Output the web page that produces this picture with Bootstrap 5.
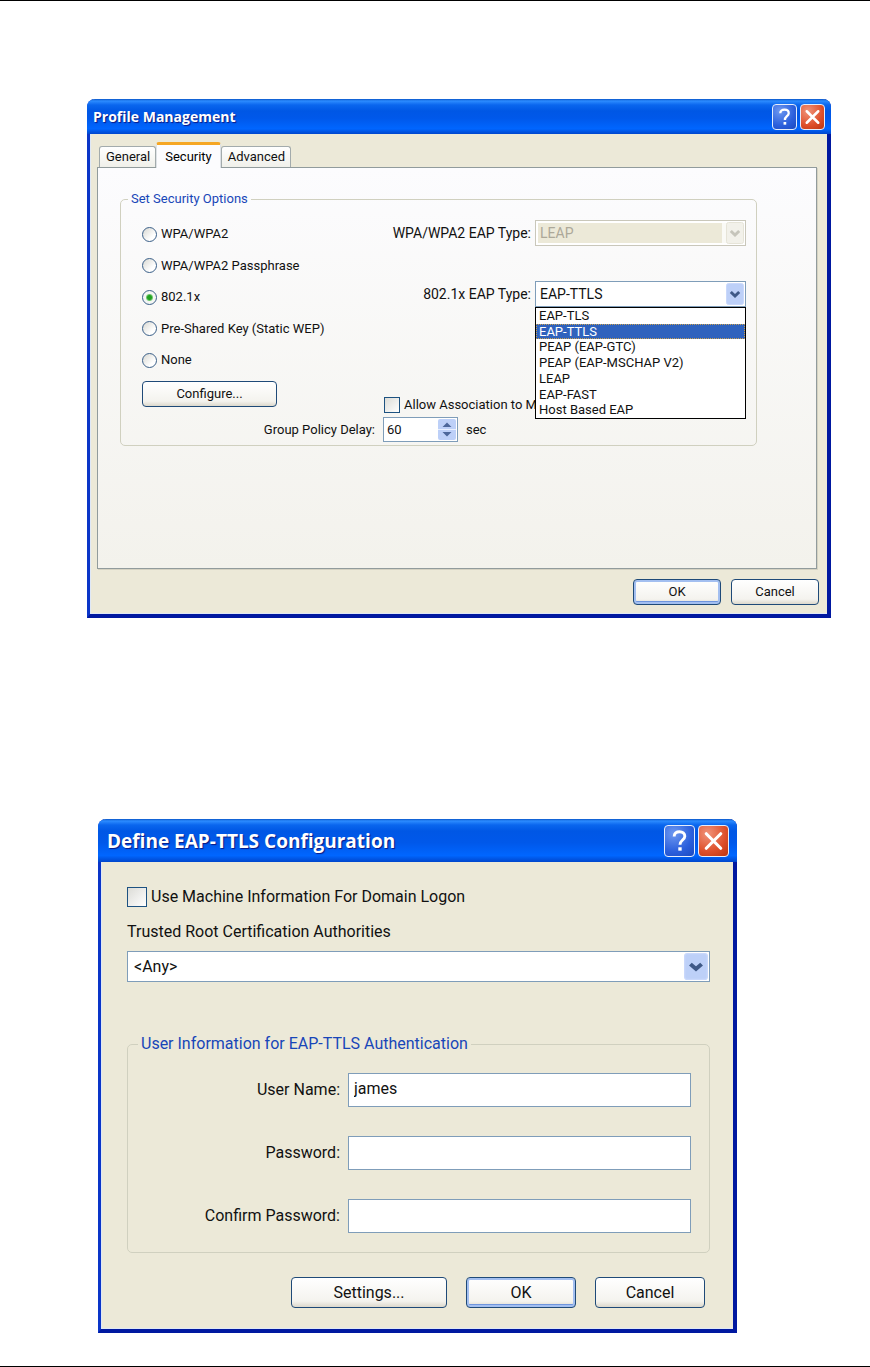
<!DOCTYPE html>
<html lang="en">
<head>
<meta charset="utf-8">
<meta name="viewport" content="width=device-width, initial-scale=1">
<title>Profile Management</title>
<link href="https://cdn.jsdelivr.net/npm/bootstrap@5.3.0/dist/css/bootstrap.min.css" rel="stylesheet">
<style>
  body { background: #fff; color: #111; font-family: Roboto, "Liberation Sans", sans-serif; }
  .sheet { border-top: 1px solid #000; border-bottom: 1px solid #000; padding: 98px 39px 33px 87px; }

  /* window frame */
  .win { --fs: 13px; --line: 20px; font-size: var(--fs); line-height: var(--line);
    border: solid #0a35c8; border-width: 0 4px 4px 3px; border-right-color: #0018a0; border-bottom-color: #0018a0;
    border-radius: 8px 8px 0 0; background: #ece9d8; }
  .win-config { --fs: 16px; margin: 201px 94px 0 11px; }
  .win-title { height: 35px; margin: 0 -4px 0 -3px; padding: 0 6px 0 6px; border-radius: 8px 8px 0 0; color: #fff;
    background: linear-gradient(#0a55c8 0, #2c8cff 2px, #0a66ee 6px, #0057e5 12px, #0058ea 55%, #0066ff 85%, #0046cc 100%); }
  .win-title h2 { font: 700 14px/20px "Open Sans", sans-serif; text-shadow: 1px 1px 1px #0a1883; }
  .win-config .win-title { height: 43px; padding-left: 9px; padding-right: 8px; }
  .win-config .win-title h2 { font-size: 19px; }
  .cap { width: 25px; height: 26px; padding: 0; border: 1px solid #e6eefc; border-radius: 4px; }
  .cap svg { width: 100%; height: 100%; display: block; }
  .win-config .cap { width: 31px; height: 32px; }
  .cap-help { margin-right: 3px; background: radial-gradient(circle at 30% 25%, #6d98f0, #2b5fdc 60%, #1c49c0); }
  .cap-close { background: radial-gradient(circle at 30% 25%, #f0937a, #de4f2a 60%, #bb3510); }

  .win-body { padding: 8px 8px 9px 7px; box-shadow: inset 1px -1px 0 #dfe8f6; }
  .win-config .win-body { padding: 25px 23px 21px 26px; }

  /* tabs */
  .xp-tabs { padding-left: 2px; border: 0; }
  .xp-tabs .nav-link { margin: 0; padding: 0 5px 0 6px; height: 21px; line-height: 20px; color: #111; border: 1px solid #a3abac; border-bottom: 0;
    border-radius: 3px 3px 0 0; background: linear-gradient(#fff, #f0f0ea); }
  .xp-tabs .nav-link.active { height: 26px; margin-bottom: -1px; padding: 0 8px; line-height: 20px; background: #fcfcfe; border-top: 3px solid #f5a623; position: relative; }
  .xp-panel { margin-right: 2px; border: 1px solid #919b9c; padding: 21px 59px 122px 22px; background: linear-gradient(#fcfcfe, #f3f2ec);
    box-shadow: 1px 1px 0 #d5d2c2; }

  .group { border: 1px solid #d0d0bf; border-radius: 5px; padding: 0; margin: 0; min-width: 0; }
  .group legend { float: none; width: auto; margin: 0 0 0 7px; padding: 0 3px; font-size: var(--fs); line-height: var(--line); color: #1846b8; }
  .win-config .group { margin-top: 52px; }
  .win-config .group legend { margin-left: 10px; }

  /* ticks and radios */
  .form-check-input.tick { margin: 0; padding: 0; flex: none; width: 16px; height: 16px; border: 1px solid #1d5281; border-radius: 0;
    background: linear-gradient(135deg, #dcdcd7, #fff); float: none; }
  .win-config .form-check-input.tick { width: 20px; height: 20px; }
  .dot { appearance: none; margin: 0; flex: none; width: 15px; height: 15px; border: 1px solid #3a5f88; border-radius: 50%;
    background: linear-gradient(135deg, #d8d8d2, #fff 70%); }
  .dot:checked { background: radial-gradient(circle, #21a121 0 2px, #6fc86f 3px, #f4f6f4 4px); }
  .choices { height: 146px; margin-bottom: 11px; }
  .left-col { padding: 15px 0 0 21px; width: 263px; }
  .right-col { padding-top: 11px; padding-right: 10px; }
  .type-row { margin-bottom: 35px; font-size: 14px; }
  .mixed-row { margin-top: 88px; white-space: nowrap; }

  /* fields */
  .field { border: 1px solid #7f9db9; border-radius: 0; background: #fff; color: #111; font: inherit; outline: 0; }
  .combo { position: relative; }
  .combo .field { appearance: none; width: 100%; height: 26px; padding: 0 24px 0 4px; display: block; }
  .combo .arrow { position: absolute; right: 2px; top: 2px; width: 18px; height: 22px; pointer-events: none; }
  .combo-type { width: 211px; flex: none; }
  .win-config .combo .field { height: 31px; padding-left: 6px; }
  .win-config .combo .arrow { width: 24px; height: 27px; }
  .combo .field:disabled { color: #aca899; opacity: 1; border-color: #c9c7ba; background: #ece9d8; box-shadow: inset 0 0 0 2px #fff, inset -23px 0 0 #fafaf6; }
  .drop { position: absolute; z-index: 5; left: 0; top: 100%; width: 100%; height: 112px; padding: 0; border: 1px solid #000;
    background: #fff; display: grid; grid-auto-rows: 1fr; list-style: none; margin: 0; font-size: 13px; }
  .drop li { padding-left: 3px; line-height: 16px; min-height: 0; }
  .drop .chosen { background: #2f62bd; color: #fff; outline: 1px dotted #c9a050; outline-offset: -1px; }
  .spin { position: relative; width: 75px; height: 25px; }
  .spin input { width: 100%; height: 100%; padding: 0 22px 0 3px; appearance: textfield; }
  .spin input::-webkit-inner-spin-button { appearance: none; }
  .spin svg { position: absolute; right: 2px; top: 2px; width: 18px; height: 21px; pointer-events: none; }
  .policy { padding: 2px 0 3px; }
  .policy label { width: 254px; }
  .roots-label { display: block; margin: 15px 0 9px; }
  .creds { display: grid; grid-template-columns: 212px 1fr; gap: 29px 8px; padding: 19px 18px 19px 0; align-items: center; }
  .creds .field { height: 34px; padding: 0 5px 4px; min-width: 0; width: 100%; }

  .buttons { display: flex; justify-content: flex-end; gap: 10px; margin-top: 10px; }
  .win-config .buttons { gap: 19px; margin: 24px 5px 0 0; }
  .xp-btn { height: 26px; padding: 0; border: 1px solid #1f4a78; border-radius: 4px; color: #111; font-size: var(--fs); line-height: 20px;
    background: linear-gradient(#fff, #f4f3ee 80%, #dcd8cc); width: 88px; }
  .xp-btn.default-btn { box-shadow: inset 0 0 0 2px #a3bff0, inset 0 -3px 0 #6f95dd; }
  .xp-btn.wide { width: 135px; }
  .win-config .xp-btn { height: 31px; width: 110px; }
  .win-config .xp-btn.wide { width: 156px; }
</style>
</head>
<body>
<svg class="d-none" aria-hidden="true">
  <symbol id="help" viewBox="0 0 24 24"><path d="M7.6 8.2C7.6 5.600 9.400 4.400 12 4.400s4.400 1.400 4.400 3.600c0 3-4 3.400-4 7" fill="none" stroke="#fff" stroke-width="2.400"/><rect x="11" y="17.200" width="2.800" height="2.800" fill="#fff"/></symbol>
  <symbol id="close" viewBox="0 0 24 24"><path d="M6 6l12 12M18 6L6 18" fill="none" stroke="#fff" stroke-width="2.600" stroke-linecap="round"/></symbol>
  <symbol id="down" viewBox="0 0 18 22" preserveAspectRatio="none"><rect x=".5" y=".5" width="17" height="21" rx="2" fill="#bdd0f8" stroke="#c9d8fb"/><path d="M4.800 9l4.200 4 4.200-4" fill="none" stroke="#3f5987" stroke-width="3"/></symbol>
  <symbol id="downOff" viewBox="0 0 18 22"><rect x=".5" y=".5" width="17" height="21" rx="2" fill="#f2f1ea" stroke="#e6e4d8"/><path d="M4.800 9l4.200 4 4.200-4" fill="none" stroke="#c6c5bb" stroke-width="3"/></symbol>
</svg>

<main class="sheet">
  <section class="win" aria-labelledby="t1">
    <header class="win-title d-flex align-items-center">
      <h2 class="m-0 me-auto" id="t1">Profile Management</h2>
      <button type="button" class="cap cap-help" aria-label="Help"><svg><use href="#help"/></svg></button>
      <button type="button" class="cap cap-close" aria-label="Close"><svg><use href="#close"/></svg></button>
    </header>
    <div class="win-body">
      <ul class="nav nav-tabs xp-tabs align-items-end" role="tablist">
        <li><button type="button" role="tab" class="nav-link">General</button></li>
        <li><button type="button" role="tab" class="nav-link active" aria-selected="true">Security</button></li>
        <li><button type="button" role="tab" class="nav-link">Advanced</button></li>
      </ul>
      <form class="xp-panel">
        <fieldset class="group">
          <legend>Set Security Options</legend>
          <div class="d-flex">
            <div class="left-col flex-shrink-0">
              <div class="choices d-flex flex-column justify-content-between">
                <div class="d-flex align-items-center gap-1"><input class="dot" type="radio" name="sec" id="r1"><label for="r1">WPA/WPA2</label></div>
                <div class="d-flex align-items-center gap-1"><input class="dot" type="radio" name="sec" id="r2"><label for="r2">WPA/WPA2 Passphrase</label></div>
                <div class="d-flex align-items-center gap-1"><input class="dot" type="radio" name="sec" id="r3" checked><label for="r3">802.1x</label></div>
                <div class="d-flex align-items-center gap-1"><input class="dot" type="radio" name="sec" id="r4"><label for="r4">Pre-Shared Key (Static WEP)</label></div>
                <div class="d-flex align-items-center gap-1"><input class="dot" type="radio" name="sec" id="r5"><label for="r5">None</label></div>
              </div>
              <button type="button" class="btn xp-btn wide">Configure...</button>
            </div>
            <div class="right-col flex-grow-1">
              <div class="type-row d-flex align-items-center justify-content-end gap-1">
                <label for="wpaType">WPA/WPA2 EAP Type:</label>
                <div class="combo combo-type"><select class="field" id="wpaType" disabled><option>LEAP</option></select><svg class="arrow"><use href="#downOff"/></svg></div>
              </div>
              <div class="type-row d-flex align-items-center justify-content-end gap-1 mb-0">
                <label for="xType">802.1x EAP Type:</label>
                <div class="combo combo-type">
                  <select class="field" id="xType"><option>EAP-TTLS</option></select><svg class="arrow"><use href="#down"/></svg>
                  <ul class="drop" role="listbox" aria-label="802.1x EAP Type">
                    <li role="option">EAP-TLS</li>
                    <li role="option" class="chosen" aria-selected="true">EAP-TTLS</li>
                    <li role="option">PEAP (EAP-GTC)</li>
                    <li role="option">PEAP (EAP-MSCHAP V2)</li>
                    <li role="option">LEAP</li>
                    <li role="option">EAP-FAST</li>
                    <li role="option">Host Based EAP</li>
                  </ul>
                </div>
              </div>
              <div class="mixed-row d-flex align-items-center">
                <input class="form-check-input tick" type="checkbox" id="mixed"><label class="ps-1" for="mixed">Allow Association to Mi</label>
              </div>
            </div>
          </div>
          <div class="policy d-flex align-items-center">
            <label class="text-end me-2" for="delay">Group Policy Delay:</label>
            <div class="spin"><input class="field" type="number" id="delay" value="60">
              <svg viewBox="0 0 18 21"><rect width="18" height="21" rx="2" fill="#bdd0f8"/><path d="M0 10.500h18" stroke="#e8effe"/><path d="M4.500 8L9 3.500 13.500 8zM4.500 13L9 17.500 13.500 13z" fill="#4d679b"/></svg>
            </div>
            <span class="ms-2">sec</span>
          </div>
        </fieldset>
      </form>
      <div class="buttons">
        <button type="button" class="btn xp-btn default-btn">OK</button>
        <button type="button" class="btn xp-btn">Cancel</button>
      </div>
    </div>
  </section>

  <section class="win win-config" aria-labelledby="t2">
    <header class="win-title d-flex align-items-center">
      <h2 class="m-0 me-auto" id="t2">Define EAP-TTLS Configuration</h2>
      <button type="button" class="cap cap-help" aria-label="Help"><svg><use href="#help"/></svg></button>
      <button type="button" class="cap cap-close" aria-label="Close"><svg><use href="#close"/></svg></button>
    </header>
    <form class="win-body">
      <div class="d-flex align-items-center gap-1">
        <input class="form-check-input tick" type="checkbox" id="machine"><label for="machine">Use Machine Information For Domain Logon</label>
      </div>
      <label class="roots-label" for="roots">Trusted Root Certification Authorities</label>
      <div class="combo"><select class="field" id="roots"><option>&lt;Any&gt;</option></select><svg class="arrow"><use href="#down"/></svg></div>
      <fieldset class="group">
        <legend>User Information for EAP-TTLS Authentication</legend>
        <div class="creds">
          <label class="text-end" for="user">User Name:</label><input class="field" type="text" id="user" value="james">
          <label class="text-end" for="pw">Password:</label><input class="field" type="password" id="pw">
          <label class="text-end" for="pw2">Confirm Password:</label><input class="field" type="password" id="pw2">
        </div>
      </fieldset>
      <div class="buttons">
        <button type="button" class="btn xp-btn wide">Settings...</button>
        <button type="button" class="btn xp-btn default-btn">OK</button>
        <button type="button" class="btn xp-btn">Cancel</button>
      </div>
    </form>
  </section>
</main>
<script src="https://cdn.jsdelivr.net/npm/bootstrap@5.3.0/dist/js/bootstrap.bundle.min.js"></script>
</body>
</html>
